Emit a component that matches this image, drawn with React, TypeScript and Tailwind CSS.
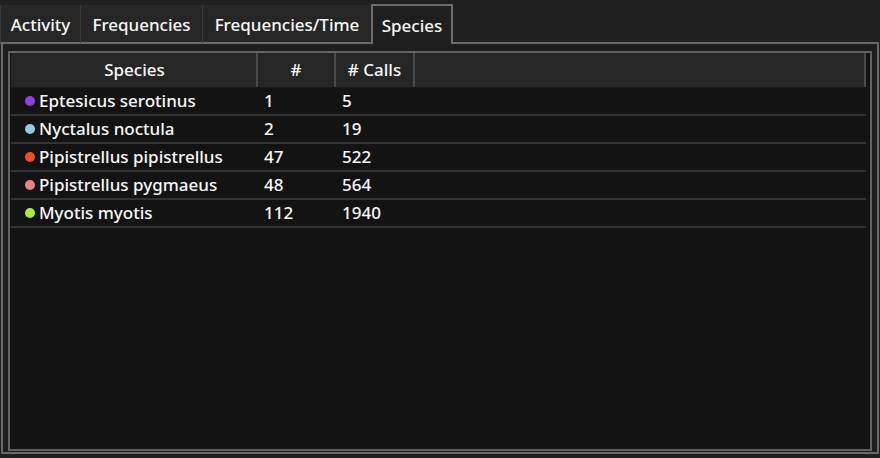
import React from "react";

const tabs = [
  { label: "Activity", w: "w-[80px]" },
  { label: "Frequencies", w: "w-[122px]" },
  { label: "Frequencies/Time", w: "w-[169px]" },
];

const rows = [
  { name: "Eptesicus serotinus", n: "1", calls: "5", color: "bg-[#8d3fe0]" },
  { name: "Nyctalus noctula", n: "2", calls: "19", color: "bg-[#8fcde6]" },
  { name: "Pipistrellus pipistrellus", n: "47", calls: "522", color: "bg-[#f04d25]" },
  { name: "Pipistrellus pygmaeus", n: "48", calls: "564", color: "bg-[#ee8080]" },
  { name: "Myotis myotis", n: "112", calls: "1940", color: "bg-[#a6ee34]" },
];

export default function App() {
  return (
    <div
      className="w-[880px] h-[458px] bg-[#202020] text-[#f8f8f8] text-[17px] font-medium overflow-hidden flex flex-col"
      style={{ fontFamily: '"Noto Sans", "Open Sans", sans-serif' }}
    >
      {/* tab strip */}
      <div className="flex items-end h-[44px] pt-[4px]">
        {tabs.map((t) => (
          <div
            key={t.label}
            className={`${t.w} h-[39px] mt-[1px] bg-[#262626] border-l border-[#3a3a3a] flex items-center justify-center pt-[3px] border-b-2 border-b-[#6a6a6a] whitespace-nowrap`}
          >
            {t.label}
          </div>
        ))}
        <div className="w-[82px] h-[40px] bg-[#1f1f1f] border-2 border-b-0 border-[#6c6c6c] flex items-center justify-center pt-[2px]">
          Species
        </div>
        <div className="flex-1 h-[40px] border-b-2 border-[#6a6a6a] mr-[1px] " />
      </div>
      {/* panel */}
      <div className="flex-1 mx-[1px] mb-[4px] border-2 border-t-0 border-[#6a6a6a] bg-[#1e1e1e] px-[5px] pt-[7px] pb-[1px] flex">
        <div className="flex-1 border-2 border-[#626262] bg-[#131313] flex flex-col pl-[1px] pr-[4px]">
          {/* header */}
          <div className="flex h-[35px] bg-[#262626] border-b border-[#1a1a1a]">
            <div className="w-[247px] flex items-center justify-center border-r-2 border-[#4a4a4a] pl-[2px]">
              Species
            </div>
            <div className="w-[78px] flex items-center justify-center border-r-2 border-[#4a4a4a]">
              #
            </div>
            <div className="w-[79px] flex items-center justify-center border-r-2 border-[#4a4a4a]">
              # Calls
            </div>
            <div className="flex-1 border-r-2 border-[#4a4a4a]" />
          </div>
          {rows.map((r) => (
            <div key={r.name} className="flex h-[28px] items-center border-b-2 border-[#333333]">
              <div className="w-[247px] flex items-center pl-[14px]">
                <span className={`w-[10px] h-[10px] rounded-full shrink-0 ${r.color} mr-[4px]`} />
                <span className="whitespace-nowrap">{r.name}</span>
              </div>
              <div className="w-[78px] pl-[6px]">{r.n}</div>
              <div className="w-[79px] pl-[6px]">{r.calls}</div>
            </div>
          ))}
        </div>
      </div>
    </div>
  );
}
